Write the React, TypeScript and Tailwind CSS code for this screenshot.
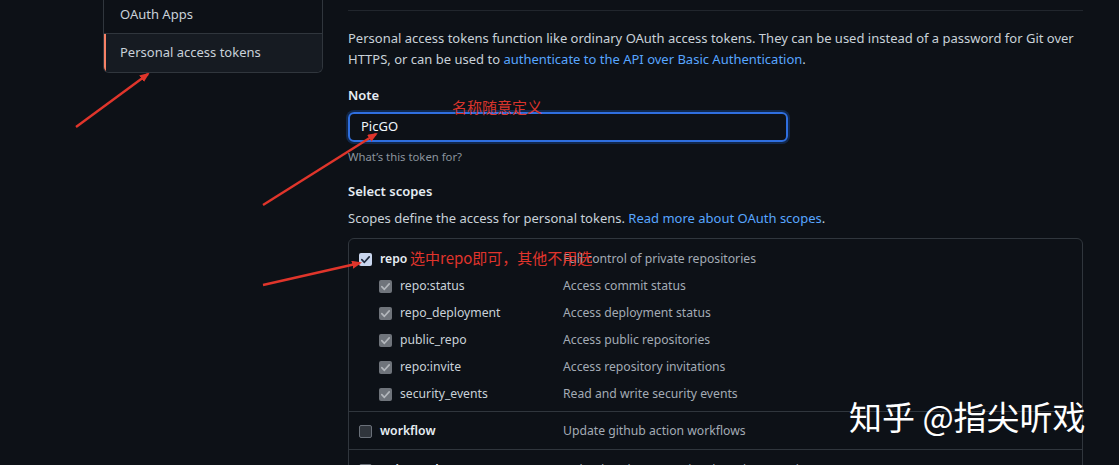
import React from "react";

const FONT = '"Noto Sans", "Liberation Sans", "Noto Sans CJK SC", sans-serif';

function Check({ color }: { color: string }) {
  return (
    <svg viewBox="0 0 14 14" className="w-full h-full">
      <path d="M3 7.2l2.8 2.8L11 4.2" fill="none" stroke={color} strokeWidth="1.8" strokeLinecap="round" strokeLinejoin="round" />
    </svg>
  );
}

function Box({ kind }: { kind: "on" | "dis" | "off" }) {
  if (kind === "on")
    return (
      <div className="w-[13px] h-[13px] rounded-[2px] bg-[#c9d6ee] shrink-0">
        <Check color="#1e2a3e" />
      </div>
    );
  if (kind === "dis")
    return (
      <div className="w-[13px] h-[13px] rounded-[2px] bg-[#6f747b] shrink-0">
        <Check color="#b3b7bc" />
      </div>
    );
  return <div className="w-[13px] h-[13px] rounded-[2px] bg-[#30353c] border border-[#6a7079] shrink-0" />;
}

const subs = [
  ["repo:status", "Access commit status"],
  ["repo_deployment", "Access deployment status"],
  ["public_repo", "Access public repositories"],
  ["repo:invite", "Access repository invitations"],
  ["security_events", "Read and write security events"],
];

export default function App() {
  return (
    <div
      className="relative w-[1119px] h-[465px] overflow-hidden bg-[#0d1117] text-[#c9d1d9] text-[13px]"
      style={{ fontFamily: FONT }}
    >
      <div className="flex pl-[103px]">
        {/* Sidebar */}
        <div className="w-[220px] mt-[-4px] self-start border-x border-b border-[#30363d] rounded-b-[6px] overflow-hidden">
          <div className="h-[38px] flex items-center pl-[16px] border-b border-[#30363d] text-[#c9d1d9]">OAuth Apps</div>
          <div className="h-[38px] flex items-center pl-[14px] border-l-2 border-[#f78166] bg-[#161b22] text-[#c9d1d9]">
            Personal access tokens
          </div>
        </div>

        {/* Main */}
        <div className="ml-[25px] w-[735px] pt-[10px]">
          <div className="border-t border-[#21262d]" />
          <p className="mt-[17px] leading-[21px] whitespace-nowrap">
            Personal access tokens function like ordinary OAuth access tokens. They can be used instead of a password for Git over
            <br />
            HTTPS, or can be used to <span className="text-[#58a6ff]">authenticate to the API over Basic Authentication</span>.
          </p>

          <div className="mt-[15px] font-semibold leading-[21px] text-[#e6edf3]">Note</div>
          <div className="mt-[6px] w-[440px] h-[30px] rounded-[6px] border-2 border-[#2f6fe0] shadow-[0_0_0_2px_rgba(31,111,235,0.25)] flex items-center pl-[11px] text-[#f0f6fc]">
            PicGO
          </div>
          <div className="mt-[6px] text-[11.3px] leading-[18px] text-[#8b949e]">What’s this token for?</div>

          <div className="mt-[15px] font-semibold leading-[21px] text-[#e6edf3]">Select scopes</div>
          <div className="mt-[6px] leading-[21px]">
            Scopes define the access for personal tokens.{" "}
            <span className="text-[#58a6ff]">Read more about OAuth scopes</span>.
          </div>

          <div className="mt-[9px] border border-[#30363d] rounded-[6px] text-[12.2px]">
            <div className="pt-[7px] pb-[3px] border-b border-[#30363d]">
              <div className="h-[27px] flex items-center pl-[10px]">
                <div className="w-[204px] flex items-center gap-[8px]">
                  <Box kind="on" />
                  <span className="font-semibold text-[#e6edf3]">repo</span>
                </div>
                <span className="text-[#a3abb5]">Full control of private repositories</span>
              </div>
              {subs.map(([a, b]) => (
                <div key={a} className="h-[27px] flex items-center pl-[30px]">
                  <div className="w-[184px] flex items-center gap-[8px]">
                    <Box kind="dis" />
                    <span className="text-[#c9d1d9]">{a}</span>
                  </div>
                  <span className="text-[#a3abb5]">{b}</span>
                </div>
              ))}
            </div>
            <div className="pt-[6px] pb-[4px] border-b border-[#30363d]">
              <div className="h-[27px] flex items-center pl-[10px]">
                <div className="w-[204px] flex items-center gap-[8px]">
                  <Box kind="off" />
                  <span className="font-semibold text-[#e6edf3]">workflow</span>
                </div>
                <span className="text-[#a3abb5]">Update github action workflows</span>
              </div>
            </div>
            <div className="pt-[7px] pb-[4px]">
              <div className="h-[27px] flex items-center pl-[10px]">
                <div className="w-[204px] flex items-center gap-[8px]">
                  <Box kind="off" />
                  <span className="font-semibold text-[#e6edf3]">write:packages</span>
                </div>
                <span className="text-[#a3abb5]">Upload packages to GitHub Package Registry</span>
              </div>
            </div>
          </div>
        </div>
      </div>

      {/* Annotations */}
      <div
        className="absolute left-[452px] top-[97px] text-[15px] leading-[20px] text-[#d8342c]"
        style={{ fontFamily: '"Noto Sans CJK SC", sans-serif' }}
      >
        名称随意定义
      </div>
      <div
        className="absolute left-[410px] top-[248px] text-[15px] leading-[20px] text-[#e0342c]"
        style={{ fontFamily: '"Noto Sans CJK SC", sans-serif' }}
      >
        选中repo即可，其他不用选
      </div>

      <svg className="absolute inset-0 pointer-events-none" width="1119" height="465">
        <defs>
          <marker id="ah" markerWidth="10" markerHeight="8" refX="8" refY="4" orient="auto" markerUnits="userSpaceOnUse">
            <path d="M0 0L10 4L0 8z" fill="#e0352b" />
          </marker>
        </defs>
        <line x1="76" y1="127" x2="148" y2="74" stroke="#e0352b" strokeWidth="2.4" markerEnd="url(#ah)" />
        <line x1="263" y1="205" x2="376" y2="134" stroke="#e0352b" strokeWidth="2.4" markerEnd="url(#ah)" />
        <line x1="263" y1="285" x2="360" y2="263" stroke="#e0352b" strokeWidth="2.4" markerEnd="url(#ah)" />
      </svg>

      <div
        className="absolute left-[849px] top-[396px] text-[33px] leading-[40px] font-normal text-white whitespace-nowrap"
        style={{ fontFamily: '"Noto Sans CJK SC", sans-serif' }}
      >
        知乎 @指尖听戏
      </div>
    </div>
  );
}
